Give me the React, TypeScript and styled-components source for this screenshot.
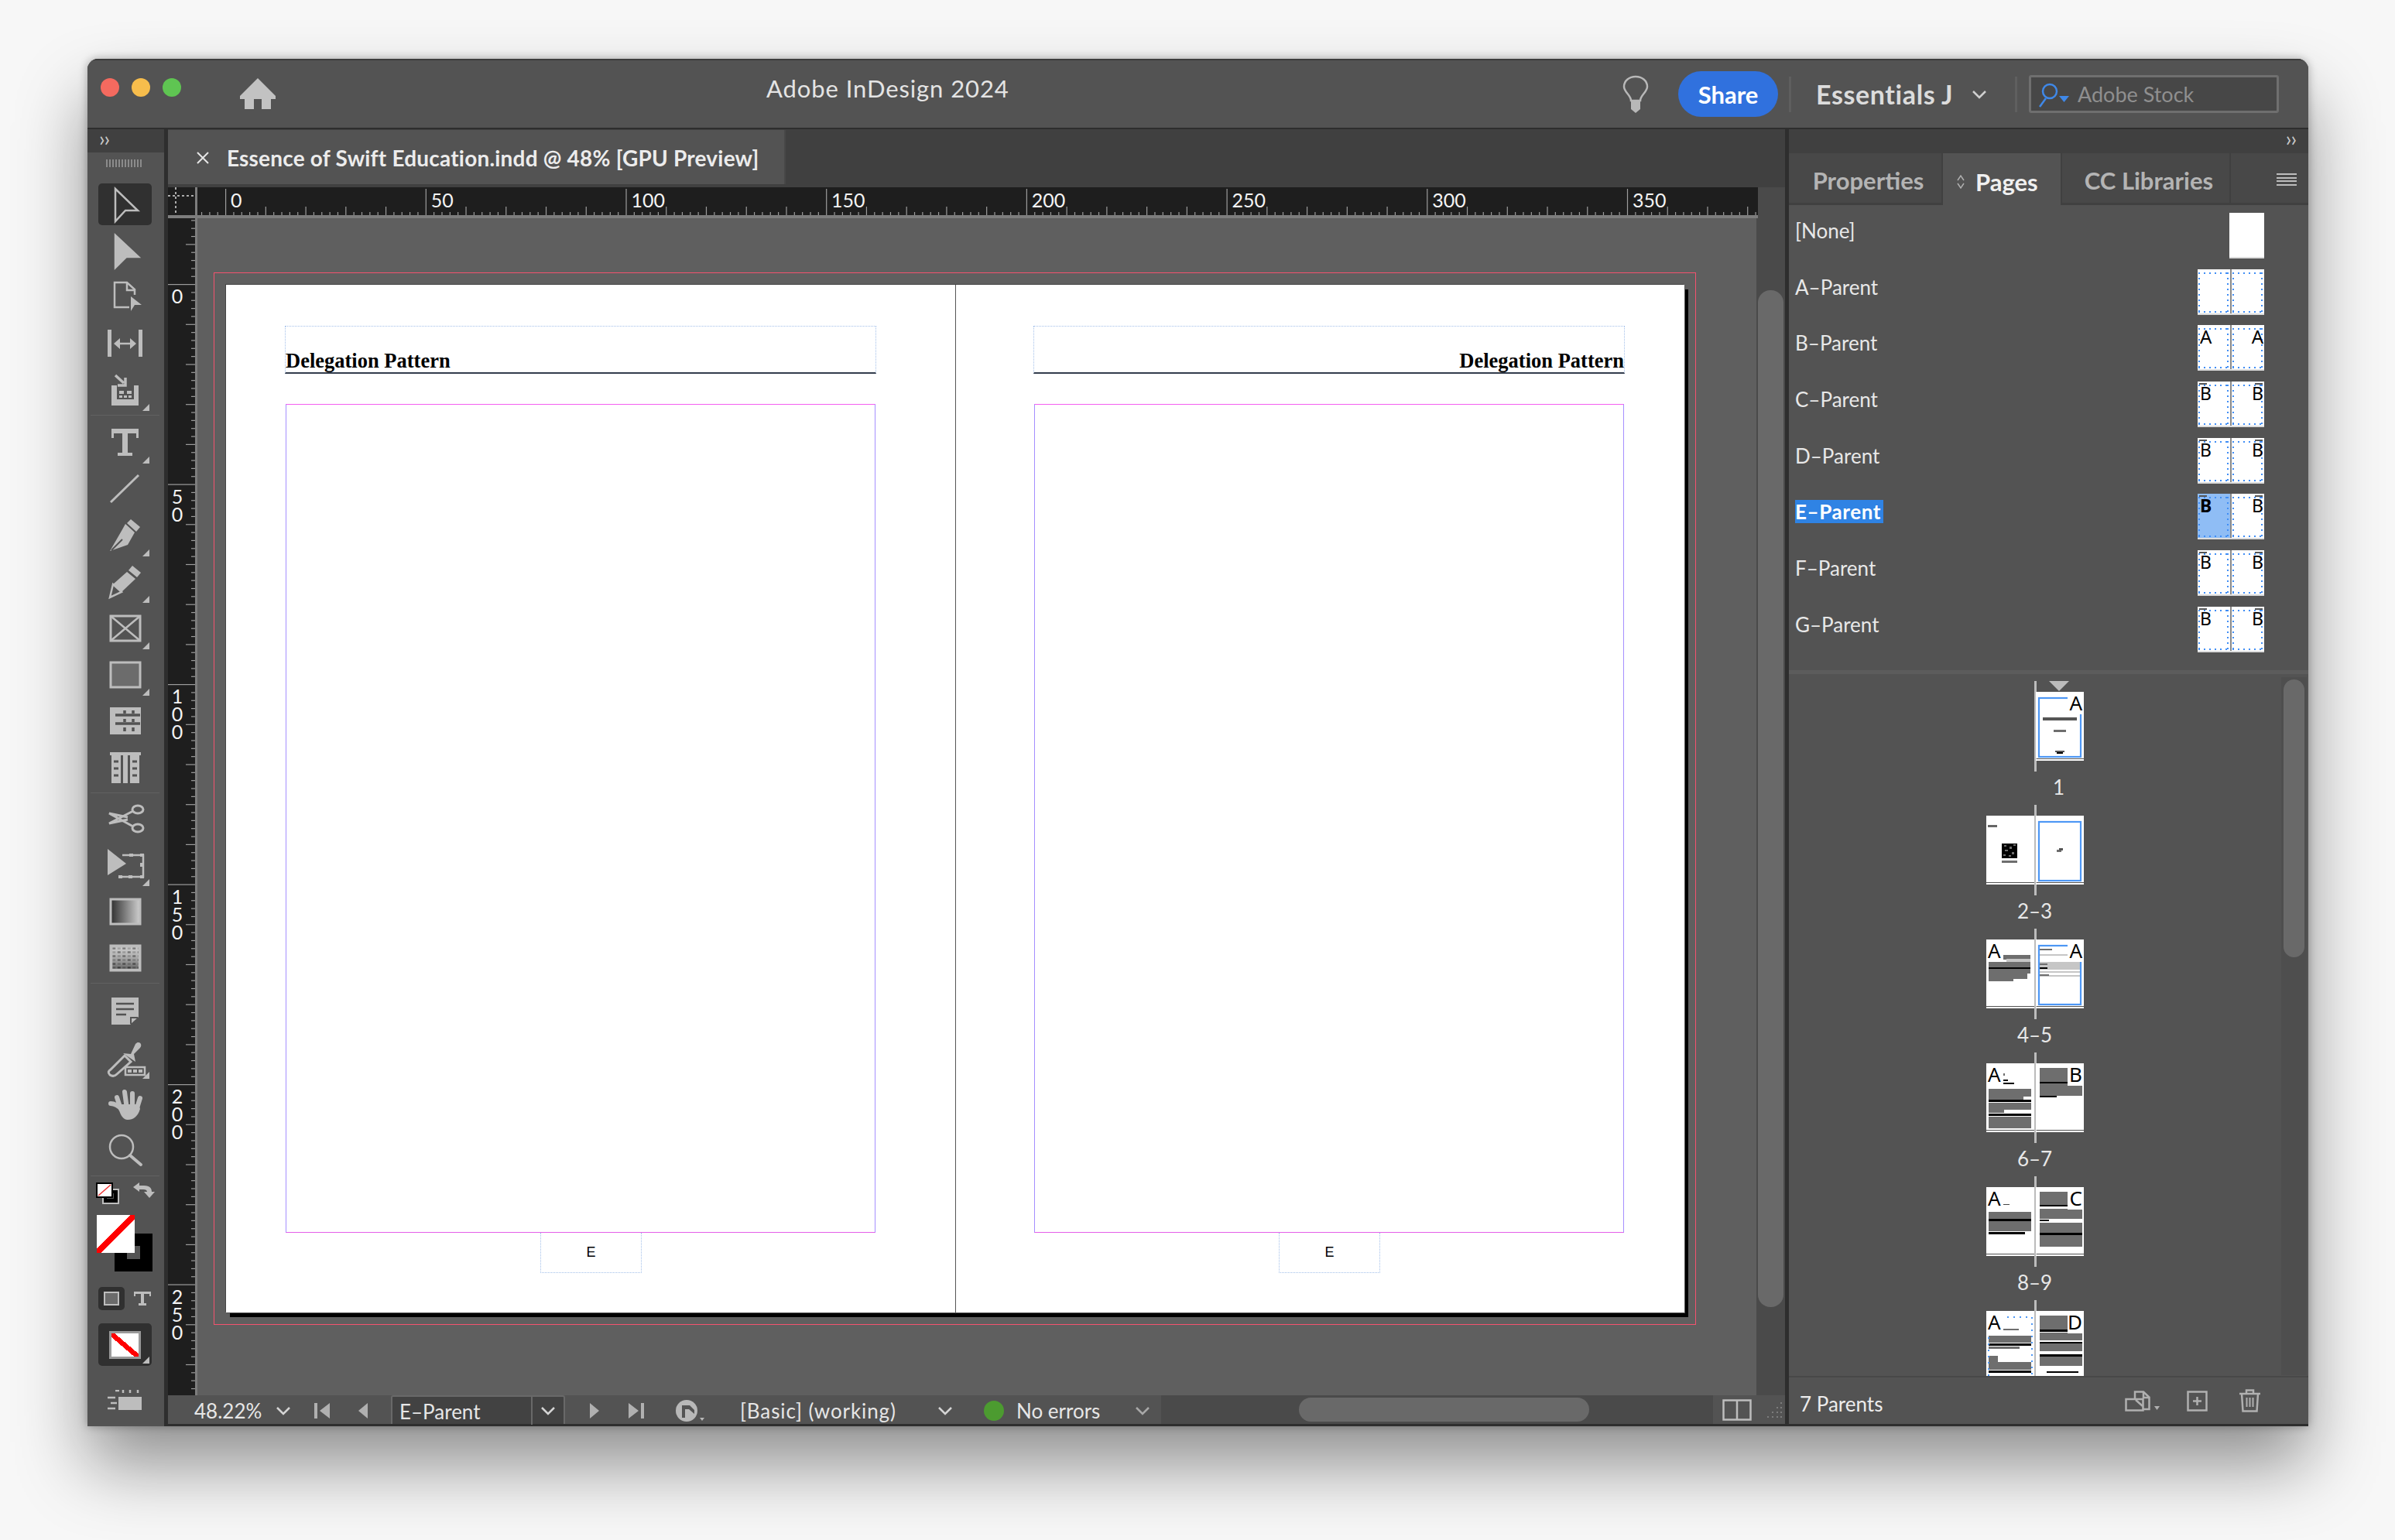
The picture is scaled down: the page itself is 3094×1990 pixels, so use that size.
import React from 'react'
import styled, { createGlobalStyle } from 'styled-components';

const GlobalStyle = createGlobalStyle`
  html, body { margin: 0; padding: 0; }
  body {
    width: 3094px;
    height: 1990px;
    overflow: hidden;
    background: #f7f7f7;
    font-family: Lato, "Open Sans", sans-serif;
  }
  * { box-sizing: border-box; }
`;

const ICON = '#bdbdbd';

/* ---------- window + title bar ---------- */

const Desktop = styled.div`
  padding: 76px 0 0 113px;
`;

const Window = styled.div`
  width: 2869px;
  height: 1767px;
  display: flex;
  flex-direction: column;
  background: #2e2e2e;
  border-radius: 14px 14px 0 0;
  overflow: hidden;
  box-shadow: 0 50px 90px rgba(0, 0, 0, 0.42), 0 0 12px rgba(0, 0, 0, 0.3);
`;

const TitleBar = styled.div`
  height: 89px;
  flex: none;
  display: flex;
  align-items: center;
  background: #535353;
  border-top: 2px solid #3c3c3c;
  margin-bottom: 2px;
`;

const Lights = styled.div`
  display: flex;
  gap: 16px;
  margin: -18px 0 0 17px;
`;

const Light = styled.span<{ $c: string }>`
  width: 24px;
  height: 24px;
  border-radius: 50%;
  background: ${p => p.$c};
`;

const HomeButton = styled.div`
  margin: -2px 0 0 76px;
  width: 46px;
  height: 40px;
  display: flex;
`;

const AppTitle = styled.div`
  width: 316px;
  margin: -15px 0 0 634px;
  color: #e4e4e4;
  font-size: 31px;
  white-space: nowrap;
  letter-spacing: 0.9px;
`;

const TitleRight = styled.div`
  margin-left: auto;
  display: flex;
  align-items: center;
  margin-right: 38px;
`;

const Share = styled.div`
  width: 129px;
  height: 59px;
  border-radius: 30px;
  background: #3071de;
  color: #fff;
  font-size: 31px;
  font-weight: 700;
  display: flex;
  align-items: center;
  justify-content: center;
  margin-left: 38px;
`;

const BarDivider = styled.span<{ $ml?: number }>`
  width: 3px;
  height: 46px;
  margin-left: ${p => p.$ml ?? 0}px;
  background: #5f5f5f;
`;

const Workspace = styled.div`
  width: 289px;
  display: flex;
  align-items: center;
  gap: 24px;
  padding-left: 32px;
  color: #dcdcdc;
  font-size: 34px;
  font-weight: 700;
  white-space: nowrap;
  letter-spacing: 0.6px;
`;

const SearchBox = styled.div`
  width: 323px;
  height: 49px;
  margin-left: 15px;
  border: 3px solid #6f6f6f;
  border-radius: 3px;
  background: #474747;
  display: flex;
  align-items: center;
  gap: 9px;
  padding-left: 9px;
  color: #8f8f8f;
  font-size: 27px;
`;

/* ---------- body columns ---------- */

const Columns = styled.div`
  flex: 1;
  min-height: 0;
  display: flex;
  gap: 5px;
`;

const ToolPanel = styled.div`
  width: 99px;
  flex: none;
  background: #535353;
  display: flex;
  flex-direction: column;
`;

const PanelCap = styled.div<{ $right?: boolean }>`
  height: 30px;
  flex: none;
  background: #404040;
  color: #c8c8c8;
  font-size: 27px;
  line-height: 24px;
  padding: 0 ${p => (p.$right ? '16px' : '0')} 0 ${p => (p.$right ? '0' : '15px')};
  text-align: ${p => (p.$right ? 'right' : 'left')};
  letter-spacing: -1px;
`;

const Grip = styled.div`
  width: 48px;
  height: 10px;
  margin: 9px 0 18px 24px;
  flex: none;
  background: repeating-linear-gradient(90deg, #8b8b8b 0 2px, #535353 2px 4px);
`;

const Tool = styled.div`
  position: relative;
  width: 96px;
  height: 60px;
  flex: none;
  display: flex;
  align-items: center;
  justify-content: center;
`;

const ToolGlyph = styled.span`
  position: relative;
  display: flex;
`;

const ActiveBack = styled.span`
  position: absolute;
  left: 14px;
  top: 3px;
  width: 69px;
  height: 54px;
  border-radius: 5px;
  background: #303030;
`;

const CornerMark = styled.span`
  position: absolute;
  left: 71px;
  bottom: 3px;
  width: 9px;
  height: 9px;
  background: ${ICON};
  clip-path: polygon(100% 0, 100% 100%, 0 100%);
`;

const ToolRule = styled.div<{ $after: number }>`
  height: 1px;
  flex: none;
  margin: 2px 6px ${p => p.$after}px 4px;
  background: #616161;
`;

const SwatchTools = styled.div`
  position: relative;
  height: 118px;
  flex: none;
`;

const DefaultIcons = styled.div`
  height: 30px;
  display: flex;
  gap: 18px;
  padding: 3px 0 0 11px;
`;

const FillBox = styled.div`
  position: absolute;
  left: 12px;
  top: 45px;
  width: 49px;
  height: 49px;
  background: linear-gradient(to top left, #fff 44%, #f00 44%, #f00 56%, #fff 56%);
  z-index: 1;
`;

const StrokeBox = styled.div`
  position: absolute;
  left: 35px;
  top: 69px;
  width: 49px;
  height: 49px;
  border: 16px solid #000;
`;

const ModeRow = styled.div`
  display: flex;
  align-items: center;
  gap: 12px;
  height: 30px;
  margin: 20px 0 17px 14px;
  flex: none;
`;

const ModeButton = styled.div`
  width: 34px;
  height: 30px;
  border-radius: 5px;
  background: #303030;
  display: flex;
  align-items: center;
  justify-content: center;
`;

const ModeSquare = styled.span`
  width: 20px;
  height: 18px;
  background: #6b6b6b;
  border: 2px solid ${ICON};
`;

const TextMode = styled.span`
  display: flex;
`;

const ApplyNone = styled.div`
  position: relative;
  width: 69px;
  height: 55px;
  margin-left: 14px;
  border-radius: 5px;
  background: #303030;
  display: flex;
  align-items: center;
  justify-content: center;
  flex: none;
`;

const ApplyInner = styled.span`
  width: 41px;
  height: 36px;
  border: 3px solid #9a9a9a;
  background: linear-gradient(to top right, #fff 42%, #f00 42%, #f00 56%, #fff 56%);
`;

const ApplyMark = styled(CornerMark)`
  left: 57px;
  bottom: 3px;
`;

const ScreenMode = styled.div`
  margin: 31px 0 0 26px;
  display: flex;
`;

/* ---------- document column ---------- */

const DocColumn = styled.div`
  width: 2089px;
  flex: none;
  display: flex;
  flex-direction: column;
`;

const DocTabs = styled.div`
  height: 75px;
  flex: none;
  background: #404040;
  display: flex;
  padding-top: 1px;
`;

const DocTab = styled.div`
  width: 798px;
  height: 70px;
  background: #535353;
  display: flex;
  align-items: center;
  gap: 22px;
  padding: 2px 0 0 36px;
  color: #ececec;
  font-size: 28px;
  font-weight: 700;
  letter-spacing: 0.2px;
  white-space: nowrap;
  border-right: 2px solid #484848;
`;

const CloseIcon = styled.svg`
  flex: none;
`;

const RulerTop = styled.div`
  height: 40px;
  flex: none;
  display: flex;
`;

const RulerCorner = styled.div`
  width: 38px;
  height: 40px;
  flex: none;
  background: #1e1e1e;
  border-right: 3px solid #7d7d7d;
  border-bottom: 4px solid #7d7d7d;
`;

const TopTicks = styled.div`
  width: 2016px;
  height: 40px;
  flex: none;
  background: #1e1e1e;
  border-bottom: 4px solid #7d7d7d;
  padding-top: 2px;
`;

const TrackCap = styled.div`
  flex: 1;
  background: #4a4a4a;
`;

const DocMiddle = styled.div`
  flex: 1;
  min-height: 0;
  display: flex;
`;

const LeftRuler = styled.div`
  width: 38px;
  flex: none;
  background: #1e1e1e;
  border-right: 3px solid #7d7d7d;
  overflow: hidden;
`;

const Canvas = styled.div`
  width: 2014px;
  flex: none;
  background: #5f5f5f;
  padding: 70px 0 0 21px;
  overflow: hidden;
`;

const Bleed = styled.div`
  width: 1915px;
  height: 1360px;
  border: 1px solid #f4526e;
  padding: 15px 0 0 15px;
`;

const Spread = styled.div`
  width: 1884px;
  height: 1328px;
  display: flex;
  background: #fff;
  box-shadow: 1px 1px 0 #555, 5px 6px 0 #000, -1px -1px 0 #444;
`;

const Page = styled.div<{ $left: number; $right: number; $spine?: boolean }>`
  width: ${p => (p.$spine ? 943 : 941)}px;
  height: 100%;
  padding: 53px ${p => p.$right}px 0 ${p => p.$left}px;
  border-right: ${p => (p.$spine ? '1px solid #555' : 'none')};
`;

const HeaderFrame = styled.div<{ $end?: boolean }>`
  height: 62px;
  border: 1px dotted #a3c0ea;
  border-bottom: 2px solid #333d4d;
  display: flex;
  align-items: flex-end;
  justify-content: ${p => (p.$end ? 'flex-end' : 'flex-start')};
  font-family: "Liberation Serif", serif;
  font-weight: 700;
  font-size: 26.5px;
  line-height: 26px;
  padding-bottom: 2px;
  margin: 0 -1px;
  color: #000;
`;

const MarginBox = styled.div`
  height: 1071px;
  margin-top: 39px;
  border-top: 1px solid #f45ff0;
  border-bottom: 1px solid #e45fe8;
  border-left: 1px solid #a58fff;
  border-right: 1px solid #a58fff;
`;

const FolioFrame = styled.div<{ $offset: number }>`
  width: 131px;
  height: 52px;
  margin-left: ${p => p.$offset}px;
  border: 1px dotted #a3c0ea;
  border-top: none;
  display: flex;
  align-items: center;
  justify-content: center;
  color: #000;
  font-size: 18px;
  font-family: "Liberation Sans", sans-serif;
`;

const VScroll = styled.div`
  flex: 1;
  background: #4a4a4a;
  padding: 93px 2px 0 2px;
`;

const VThumb = styled.div`
  height: 1314px;
  border-radius: 16px;
  background: #696969;
`;

/* ---------- status bar ---------- */

const StatusBar = styled.div`
  height: 37px;
  flex: none;
  display: flex;
  background: #4a4a4a;
  margin-bottom: 3px;
`;

const StatusLeft = styled.div`
  width: 1283px;
  flex: none;
  display: flex;
  align-items: center;
  padding-top: 3px;
  background: #535353;
  color: #e6e6e6;
  font-size: 26px;
  white-space: nowrap;
`;

const StatusText = styled.span<{ $w: number; $ml?: number; $track?: number }>`
  width: ${p => p.$w}px;
  margin-left: ${p => p.$ml ?? 0}px;
  letter-spacing: ${p => p.$track ?? 0}px;
  flex: none;
`;

const PageField = styled.div`
  width: 225px;
  align-self: stretch;
  flex: none;
  margin: -3px 0 0 30px;
  padding: 3px 0 0 9px;
  display: flex;
  border: 2px solid #696969;
  border-bottom: none;
  border-radius: 3px 3px 0 0;
  background: #424242;
  align-items: center;
`;

const FieldText = styled.span`
  width: 170px;
  flex: none;
`;

const FieldDrop = styled.span`
  flex: 1;
  height: 37px;
  margin-top: -3px;
  border-left: 2px solid #696969;
  display: flex;
  align-items: center;
  justify-content: center;
`;

const StatusIcon = styled.span<{ $ml: number }>`
  display: flex;
  margin-left: ${p => p.$ml}px;
  flex: none;
`;

const GreenDot = styled.span`
  width: 26px;
  height: 26px;
  border-radius: 50%;
  background: #4c9b30;
  margin-left: 40px;
  flex: none;
`;

const HScroll = styled.div`
  flex: 1;
  display: flex;
  align-items: center;
  padding-left: 178px;
`;

const HThumb = styled.div`
  width: 375px;
  height: 31px;
  border-radius: 16px;
  background: #696969;
`;

const StatusEnd = styled.div`
  width: 93px;
  flex: none;
  background: #535353;
  display: flex;
  align-items: center;
  padding-left: 12px;
  gap: 18px;
`;

/* ---------- right panel ---------- */

const RightPanel = styled.div`
  flex: 1;
  display: flex;
  flex-direction: column;
  background: #535353;
  margin-bottom: 3px;
`;

const TabRow = styled.div`
  height: 68px;
  flex: none;
  display: flex;
  background: #404040;
  padding-top: 1px;
  gap: 2px;
`;

const PanelTab = styled.div<{ $w: number; $active?: boolean }>`
  width: ${p => p.$w}px;
  height: ${p => (p.$active ? 67 : 64)}px;
  flex: none;
  display: flex;
  align-items: center;
  justify-content: ${p => (p.$active ? 'flex-start' : 'center')};
  gap: 14px;
  padding: 6px 0 0 ${p => (p.$active ? 18 : 8)}px;
  background: ${p => (p.$active ? '#535353' : '#484848')};
  color: ${p => (p.$active ? '#f0f0f0' : '#b4b4b4')};
  font-size: 31px;
  font-weight: 700;
  white-space: nowrap;
`;

const TabFill = styled.div`
  flex: 1;
  height: 64px;
  background: #484848;
  display: flex;
  align-items: center;
  justify-content: flex-end;
  padding: 4px 15px 0 0;
`;

const MenuLines = styled.span`
  width: 26px;
  height: 16px;
  background: repeating-linear-gradient(180deg, #bdbdbd 0 2px, transparent 2px 4.6px);
`;

const ParentList = styled.div`
  height: 606px;
  flex: none;
  padding-top: 10px;
  border-bottom: 5px solid #5c5c5c;
`;

const ParentRow = styled.div`
  height: 72.7px;
  display: flex;
  align-items: flex-start;
  justify-content: space-between;
  padding: 0 57px 0 8px;
`;

const ParentLabel = styled.span<{ $selected?: boolean }>`
  margin-top: 8px;
  height: 30px;
  line-height: 30px;
  padding: 0 3px 0 0;
  font-size: 26px;
  font-weight: ${p => (p.$selected ? 700 : 400)};
  letter-spacing: ${p => (p.$selected ? 0.6 : 0)}px;
  color: ${p => (p.$selected ? '#fff' : '#e8e8e8')};
  background: ${p => (p.$selected ? '#2f83e4' : 'transparent')};
`;

const ThumbPair = styled.div`
  display: flex;
  gap: 2px;
  background: #8a8a8a;
  border-bottom: 2px solid #ddd;
`;

const MiniPage = styled.div<{ $selected?: boolean; $solo?: boolean }>`
  position: relative;
  width: ${p => (p.$solo ? 45 : 42)}px;
  height: 57px;
  background: ${p => (p.$selected ? '#8fbdf5' : '#fff')};
  color: #000;
  font-family: "Noto Sans", sans-serif;
`;

const dotsX = 'repeating-linear-gradient(90deg, #3f8df5 0 2px, transparent 2px 7px)';
const dotsY = 'repeating-linear-gradient(180deg, #3f8df5 0 2px, transparent 2px 7px)';

const MiniGuide = styled.span`
  position: absolute;
  inset: 4px 2px 1px 1px;
  background:
    ${dotsX} top / 100% 2px no-repeat,
    ${dotsX} bottom / 100% 2px no-repeat,
    ${dotsY} left / 2px 100% no-repeat,
    ${dotsY} right / 2px 100% no-repeat;
`;

const MiniTop = styled.span<{ $end?: boolean }>`
  position: absolute;
  top: 2px;
  height: 2px;
  width: 10px;
  background: #555;
  ${p => (p.$end ? 'right: 2px;' : 'left: 2px;')}
`;

const MiniLetter = styled.span<{ $end?: boolean; $bold?: boolean; $big?: boolean }>`
  position: absolute;
  top: 3px;
  font-size: ${p => (p.$big ? 24 : 23)}px;
  line-height: 24px;
  font-weight: ${p => (p.$bold ? 700 : 400)};
  ${p => (p.$end ? 'right: 1px;' : 'left: 3px;')}
`;

const PagesArea = styled.div`
  flex: 1;
  min-height: 0;
  display: flex;
  padding-top: 4px;
`;

const PagesList = styled.div`
  flex: 1;
  overflow: hidden;
  padding: 5px 0 0 255px;
`;

const SpreadBlock = styled.div`
  height: 160px;
`;

const SpreadLine = styled.div`
  height: 117px;
  display: flex;
  align-items: center;
  position: relative;
`;

const Spine = styled.span`
  width: 3px;
  height: 117px;
  background: #bcbcbc;
  margin: 0 -1px 0 0;
  flex: none;
`;

const ThumbSlot = styled.div`
  width: 62px;
  height: 89px;
  flex: none;
  display: flex;
`;

const TargetMark = styled.span`
  position: absolute;
  left: 81px;
  top: 0;
  width: 26px;
  height: 13px;
  background: #bcbcbc;
  clip-path: polygon(0 0, 100% 0, 50% 100%);
`;

const SpreadLabel = styled.div<{ $single?: boolean }>`
  width: 125px;
  margin-left: ${p => (p.$single ? 31 : 0)}px;
  text-align: center;
  color: #e8e8e8;
  font-size: 26px;
  line-height: 30px;
  margin-top: 5px;
`;

const PagesTrack = styled.div`
  width: 33px;
  flex: none;
  margin: 0 2px 1px 0;
  background: #4e4e4e;
  padding: 3px 3px 0;
`;

const PagesThumb = styled.div`
  height: 359px;
  border-radius: 14px;
  background: #696969;
`;

const PanelFooter = styled.div`
  height: 62px;
  flex: none;
  border-top: 2px solid #484848;
  display: flex;
  align-items: center;
  padding: 8px 62px 0 14px;
  color: #ececec;
  font-size: 26px;
`;

const FooterIcons = styled.div`
  margin: -8px 0 0 auto;
  display: flex;
  align-items: center;
  gap: 34px;
`;

const TrashIcon = styled.svg`
  margin-left: 7px;
`;

const ThumbSvg = styled.svg`
  display: block;
  overflow: visible;
`;

/* ---------- drawings ---------- */

const Chevron: React.FC<{ c?: string }> = ({ c = '#d4d4d4' }) => (
  <svg width="20" height="12" viewBox="0 0 20 12">
    <path d="M2 2 L10 10 L18 2" fill="none" stroke={c} strokeWidth="2.5" />
  </svg>
);

const glyph = (body: React.ReactNode) => (
  <svg width="60" height="60" viewBox="0 0 60 60" fill="none" stroke={ICON} strokeWidth="2.5">
    {body}
  </svg>
);

const ruleAfter = [5, 3, 6, 5];

const toolGlyphs: { body: React.ReactNode; mark?: boolean; active?: boolean }[][] = [
  [
    { active: true, body: <path d="M18 10 L47 38 H31 L18 52 Z" /> },
    { body: <path d="M18 10 L48 38 H32 L18 52 Z" fill={ICON} /> },
    { body: <><path d="M43 27 V20 L33 11 H17 V43 H36" /><path d="M33 11 V21 H43" /><path d="M38 29 L52 40 H43 L38 48 Z" fill={ICON} stroke="none" /></> },
    { body: <><path d="M8 12 H13 V47 H8 Z M48 12 H53 V47 H48 Z" fill={ICON} stroke="none" /><path d="M20 30 H41" /><path d="M16 30 L24 23 V37 Z M45 30 L37 23 V37 Z" fill={ICON} stroke="none" /></> },
    { mark: true, body: <><path d="M18 11 L29 21 M31 14 V24 H21" strokeWidth="3.5" /><path d="M13 24 H20 V42 H42 V24 H48 V50 H13 Z" fill={ICON} stroke="none" /><path d="M23 31 h6 v4 h-6z M33 31 h6 v4 h-6z M23 37 h4 v3 h-4z M29 37 h4 v3 h-4z M35 37 h4 v3 h-4z" fill={ICON} stroke="none" /></> },
  ],
  [
    { mark: true, body: <path d="M13 12 H48 V24 H45 V18 H34 V43 H40 V47 H21 V43 H27 V18 H16 V24 H13 Z" fill={ICON} stroke="none" /> },
    { body: <path d="M12 47 L48 12" strokeWidth="3" /> },
    { mark: true, body: <><path d="M38 9 L50 19 L45 25 L33 14 Z" fill={ICON} stroke="none" /><path d="M31 15 L43 26 L34 42 L11 50 L26 24 Z" fill={ICON} stroke="none" /><path d="M13 49 L27 35" stroke="#535353" strokeWidth="2" /></> },
    { mark: true, body: <><path d="M40 9 L51 18 L46 24 L35 15 Z" fill={ICON} stroke="none" /><path d="M33 17 L44 26 L26 43 L15 33 Z" fill={ICON} stroke="none" /><path d="M15 33 L11 50 L26 43 Z" /></> },
    { mark: true, body: <><rect x="12" y="14" width="38" height="32" strokeWidth="3" /><path d="M12 14 L50 46 M50 14 L12 46" /></> },
    { mark: true, body: <rect x="12" y="14" width="38" height="32" strokeWidth="3" fill="#6c6c6c" /> },
    { body: <><rect x="11" y="12" width="40" height="35" fill={ICON} stroke="none" /><path d="M18 22 H50 M18 33 H50 M30 16 V20 M41 16 V20 M30 27 V31 M41 27 V31 M30 38 V43 M41 38 V43" stroke="#535353" strokeWidth="3.5" /></> },
    { body: <><path d="M11 10 H51 V14 H49 V50 H37 V14 H34 V50 H28 V14 H25 V50 H13 V14 H11 Z" fill={ICON} stroke="none" /><path d="M16 22 H22 M16 31 H22 M16 40 H22 M40 22 H46 M40 31 H46 M40 40 H46" stroke="#535353" strokeWidth="3" /></> },
  ],
  [
    { body: <><ellipse cx="47" cy="18" rx="7" ry="5" strokeWidth="3" /><ellipse cx="47" cy="42" rx="7" ry="5" strokeWidth="3" /><path d="M41 20 L10 36 L34 31 M41 40 L10 23 L34 28" strokeWidth="3" /></> },
    { mark: true, body: <><path d="M8 9 L32 28 L8 43 Z" fill={ICON} stroke="none" /><path d="M27 17 H54 V45 H22" /><path d="M22 43 h5 v4 h-5z M35 43 h5 v4 h-5z M50 43 h5 v4 h-5z M50 27 h5 v5 h-5z M50 15 h5 v4 h-5z M36 15 h5 v4 h-5z" fill={ICON} stroke="none" /></> },
    { body: <><defs><linearGradient id="toolGrad"><stop offset="0" stopColor="#2e2e2e" /><stop offset="1" stopColor="#cfcfcf" /></linearGradient></defs><rect x="12" y="14" width="38" height="32" fill="url(#toolGrad)" strokeWidth="3" /></> },
    { body: <><defs><pattern id="checks" width="13" height="10" patternUnits="userSpaceOnUse"><rect width="13" height="10" fill="#5b5b5b" /><rect width="6.5" height="5" fill="#8c8c8c" /><rect x="6.5" y="5" width="6.5" height="5" fill="#8c8c8c" /></pattern><linearGradient id="checksFade" x1="0" y1="0" x2="0" y2="1"><stop offset="0" stopColor="#fff" stopOpacity="0.2" /><stop offset="1" stopColor="#000" stopOpacity="0.5" /></linearGradient></defs><rect x="12" y="14" width="38" height="32" fill="url(#checks)" strokeWidth="3" /><rect x="13" y="15" width="36" height="30" fill="url(#checksFade)" /></> },
  ],
  [
    { body: <><path d="M13 12 H48 V37 L37 47 H13 Z" fill={ICON} stroke="none" /><path d="M19 20 H42 M19 27 H42 M19 34 H32" stroke="#535353" strokeWidth="2.5" /><path d="M38 46 V38 H47" stroke="#535353" strokeWidth="2" /></> },
    { mark: true, body: <><path d="M11 52 C8 49 9 47 12 45 L30 27 L38 35 L20 51 C17 54 14 54 11 52 Z" strokeWidth="3" /><path d="M28 24 L38 25 L44 12 C48 7 54 12 50 17 L42 25 L44 35 Z" fill={ICON} stroke="none" /><rect x="31" y="42" width="25" height="10" fill="#535353" strokeWidth="2.5" /><path d="M34 45 h5 v4 h-5z M41 45 h5 v4 h-5z M48 45 h5 v4 h-5z" fill={ICON} stroke="none" /></> },
    { body: <><path d="M12 29 C19 29 24 34 27 37" strokeWidth="6" strokeLinecap="round" /><path d="M25 36 L20 21 M33 36 L30 14 M40 36 L40 16 M45 38 L50 22" strokeWidth="6" strokeLinecap="round" /><path d="M23 30 H48 L50 36 C47 46 41 50 34 50 C28 50 25 44 23 38 Z" fill={ICON} stroke="none" /></> },
    { body: <><circle cx="26" cy="25" r="15" strokeWidth="2.5" /><path d="M37 36 L51 48" strokeWidth="4" strokeLinecap="round" /></> },
  ],
];

const Home = () => (
  <svg width="46" height="40" viewBox="0 0 46 40">
    <path d="M23 0 L46 23 V27 H40 V40 H28 V27 H18 V40 H6 V27 H0 V23 Z" fill="#c2c2c2" />
  </svg>
);

const Bulb = () => (
  <svg width="34" height="50" viewBox="0 0 34 50" fill="none" stroke="#b8b8b8" strokeWidth="2.5">
    <path d="M11 33 C11 26 2 22 2 15 C2 7 9 2 17 2 C25 2 32 7 32 15 C32 22 23 26 23 33 Z" />
    <path d="M11 34 H23 V44 L17 49 L11 44 Z" fill="#b8b8b8" stroke="none" />
  </svg>
);

const SearchIcon = () => (
  <svg width="42" height="34" viewBox="0 0 42 34" fill="none" stroke="#3f88e8" strokeWidth="2.5">
    <circle cx="15" cy="13" r="9" />
    <path d="M10 22 L2 33" />
    <path d="M27 19 H40 L33.500 27 Z" fill="#3f88e8" stroke="none" />
  </svg>
);

const ticksH = Array.from({ length: 195 }, (_, i) => i);

const TopRuler = () => (
  <svg width="2016" height="34" viewBox="0 0 2016 34" style={{ display: 'block' }}>
    {ticksH.map(i => {
      const x = 36 + i * 10.348;
      const h = i % 25 === 0 ? 34 : i % 5 === 0 ? 11 : 4;
      return <rect key={i} x={x} y={34 - h} width="1.2" height={h} fill="#9c9c9c" />;
    })}
    {ticksH.filter(i => i < 3).map(i => <rect key={`b${i}`} x={36 - 10.348 * (i + 1)} y={30} width="1.2" height="4" fill="#9c9c9c" />)}
    {[0, 50, 100, 150, 200, 250, 300, 350].map((v, i) => (
      <text key={v} x={43 + i * 258.7} y="24" fill="#f4f4f4" fontSize="25" fontFamily="Lato, sans-serif">{v}</text>
    ))}
  </svg>
);

const LeftRulerDrawing = () => (
  <svg width="35" height="1521" viewBox="0 0 35 1521" style={{ display: 'block' }}>
    {Array.from({ length: 152 }, (_, i) => {
      const y = 85 + (i - 8) * 10.34;
      const n = i - 8;
      const w = n % 25 === 0 ? 35 : n % 5 === 0 ? 12 : 5;
      return <rect key={i} x={35 - w} y={y} width={w} height="1.2" fill="#9c9c9c" />;
    })}
    {[0, 50, 100, 150, 200, 250].map((v, i) => (
      <text key={v} fontSize="25" fontFamily="Lato, sans-serif" fill="#f4f4f4" textAnchor="middle">
        {String(v).split('').map((d, k) => (
          <tspan key={k} x="12" y={85 + i * 258.6 + 25 + k * 23}>{d}</tspan>
        ))}
      </text>
    ))}
  </svg>
);

type Bar = [number, number, number, number, string];

const G = '#6e6e6e';
const K = '#000';
const L = '#c6c6c6';

const ThumbArt: React.FC<{ bars?: Bar[]; frame?: boolean; letter?: string; end?: boolean; dotted?: boolean }> = ({ bars = [], frame, letter, end, dotted }) => (
  <ThumbSvg width="62" height="89" viewBox="0 0 62 89">
    <rect width="62" height="86" fill="#fff" />
    <rect y="87" width="62" height="2" fill="#fff" />
    {bars.map((b, i) => <rect key={i} x={b[0]} y={b[1]} width={b[2]} height={b[3]} fill={b[4]} />)}
    {frame && <rect x="4" y="8" width="54" height="76" fill="none" stroke="#4d97f5" strokeWidth="2.2" />}
    {dotted && <rect x="3" y="8" width="56" height="78" fill="none" stroke="#4d97f5" strokeWidth="2" strokeDasharray="2 6" />}
    {letter && <rect x={end ? 41 : 2} y="5" width="20" height="24" fill="#fff" />}
    {letter && (
      <text x={end ? 60 : 2} y="24" textAnchor={end ? 'end' : 'start'} fontSize="26" fontFamily="Noto Sans, sans-serif" fill="#000">{letter}</text>
    )}
  </ThumbSvg>
);

const noise: Bar[] = [
  [20, 36, 20, 19, K],
  [23, 38, 3, 2, G], [30, 40, 3, 3, G], [35, 37, 3, 2, G], [24, 44, 4, 2, G], [33, 47, 3, 3, G], [22, 50, 3, 2, G], [29, 51, 3, 2, G],
  [20, 58, 20, 3, G],
];

const spreads: { label: string; left?: React.ReactNode; right: React.ReactNode }[] = [
  {
    label: '1',
    right: <ThumbArt frame letter="A" end bars={[[9, 33, 44, 4, '#555'], [23, 49, 16, 3, G], [25, 76, 12, 2, '#555'], [27, 78, 8, 2, K]]} />,
  },
  {
    label: '2–3',
    left: <ThumbArt bars={[[2, 12, 12, 3, '#666'], ...noise]} />,
    right: <ThumbArt frame bars={[[27, 44, 6, 3, G], [30, 42, 5, 3, '#555']]} />,
  },
  {
    label: '4–5',
    left: <ThumbArt letter="A" bars={[[20, 20, 37, 6, G], [26, 25, 31, 4, L], [3, 29, 54, 7, G], [3, 36, 54, 2, K], [3, 38, 54, 6, G], [3, 44, 50, 7, G], [3, 51, 32, 3, G]]} />,
    right: <ThumbArt frame letter="A" end bars={[[5, 12, 16, 2, G], [5, 19, 36, 2, L], [5, 29, 52, 10, L], [5, 31, 10, 2, G], [5, 36, 10, 2, K], [5, 41, 52, 2, L], [5, 46, 52, 2, L], [5, 45, 12, 2, G]]} />,
  },
  {
    label: '6–7',
    left: <ThumbArt letter="A" bars={[[20, 13, 4, 3, G], [20, 21, 8, 2, K], [20, 25, 16, 2, K], [3, 33, 55, 10, G], [3, 43, 45, 4, G], [3, 47, 55, 3, K], [3, 51, 55, 9, G], [3, 60, 20, 4, G], [3, 65, 55, 3, K], [3, 69, 55, 15, G]]} />,
    right: <ThumbArt letter="B" end bars={[[5, 6, 42, 18, G], [5, 24, 42, 2, K], [5, 26, 55, 16, G], [5, 42, 22, 2, K]]} />,
  },
  {
    label: '8–9',
    left: <ThumbArt letter="A" bars={[[20, 22, 10, 1, '#444'], [3, 32, 55, 9, G], [3, 41, 55, 3, K], [3, 44, 55, 13, G], [3, 58, 47, 3, K]]} />,
    right: <ThumbArt letter="C" end bars={[[5, 6, 40, 17, G], [5, 23, 40, 2, K], [5, 28, 55, 13, G], [5, 42, 12, 2, K], [5, 46, 55, 13, G], [5, 59, 55, 3, K], [5, 62, 55, 15, G]]} />,
  },
  {
    label: '10–11',
    left: <ThumbArt dotted letter="A" bars={[[20, 23, 22, 2, G], [3, 32, 55, 9, G], [3, 42, 55, 3, K], [3, 46, 40, 3, G], [3, 58, 12, 8, G], [3, 66, 10, 2, K], [3, 66, 55, 10, G], [3, 77, 55, 3, K]]} />,
    right: <ThumbArt letter="D" end bars={[[5, 6, 38, 18, G], [5, 24, 38, 3, K], [5, 28, 55, 10, G], [5, 40, 55, 2, K], [5, 42, 55, 10, G], [5, 56, 55, 3, K], [5, 59, 55, 12, G], [14, 78, 41, 2, K]]} />,
  },
];

const parents: { name: string; letter?: string; selected?: boolean }[] = [
  { name: 'A–Parent' },
  { name: 'B–Parent', letter: 'A' },
  { name: 'C–Parent', letter: 'B' },
  { name: 'D–Parent', letter: 'B' },
  { name: 'E–Parent', letter: 'B', selected: true },
  { name: 'F–Parent', letter: 'B' },
  { name: 'G–Parent', letter: 'B' },
];

const App: React.FC = () => {
  return (
    <Desktop>
      <GlobalStyle />
      <Window>
        <TitleBar>
          <Lights>
            <Light $c="#f46a5f" />
            <Light $c="#f7bd4c" />
            <Light $c="#5fc552" />
          </Lights>
          <HomeButton><Home /></HomeButton>
          <AppTitle>Adobe InDesign 2024</AppTitle>
          <TitleRight>
            <Bulb />
            <Share>Share</Share>
            <BarDivider $ml={14} />
            <Workspace>
              Essentials J
              <Chevron c="#cfcfcf" />
            </Workspace>
            <BarDivider />
            <SearchBox>
              <SearchIcon />
              Adobe Stock
            </SearchBox>
          </TitleRight>
        </TitleBar>

        <Columns>
          <ToolPanel>
            <PanelCap>››</PanelCap>
            <Grip />
            {toolGlyphs.map((group, g) => (
              <React.Fragment key={g}>
                {group.map((t, i) => (
                  <Tool key={i}>
                    {t.active && <ActiveBack />}
                    <ToolGlyph>{glyph(t.body)}</ToolGlyph>
                    {t.mark && <CornerMark />}
                  </Tool>
                ))}
                <ToolRule $after={ruleAfter[g]} />
              </React.Fragment>
            ))}
            <SwatchTools>
              <DefaultIcons>
                <svg width="30" height="28" viewBox="0 0 30 28">
                  <rect x="9" y="9" width="20" height="18" fill="#000" stroke="#bdbdbd" strokeWidth="2" />
                  <rect x="14" y="14" width="9" height="7" fill="#535353" />
                  <rect x="1" y="1" width="20" height="18" fill="#fff" stroke="#000" strokeWidth="2" />
                  <path d="M3 17 L19 3" stroke="#e33" strokeWidth="1.5" />
                </svg>
                <svg width="28" height="20" viewBox="0 0 28 20">
                  <path d="M0 6 L8 0 V4 H14 C22 4 24 8 24 12 H28 L21 20 L14 12 H18 C18 10 16 9 13 9 H8 V12 Z" fill="#bdbdbd" />
                </svg>
              </DefaultIcons>
              <FillBox />
              <StrokeBox />
            </SwatchTools>
            <ModeRow>
              <ModeButton><ModeSquare /></ModeButton>
              <TextMode>
                <svg width="22" height="18" viewBox="0 0 22 18">
                  <path d="M0 0 H22 V6 H20 V3 H13 V15 H16 V18 H6 V15 H9 V3 H2 V6 H0 Z" fill="#bdbdbd" />
                </svg>
              </TextMode>
            </ModeRow>
            <ApplyNone>
              <ApplyInner />
              <ApplyMark />
            </ApplyNone>
            <ScreenMode>
              <svg width="44" height="26" viewBox="0 0 44 26">
                <path d="M14 9 H44 V26 H14 Z" fill="#bdbdbd" />
                <path d="M10 1 h5 M20 0 v4 M29 0 v4 M39 0 v4 M0 10 h10 M4 17 h8 M0 24 h10" stroke="#bdbdbd" strokeWidth="2.5" />
              </svg>
            </ScreenMode>
          </ToolPanel>

          <DocColumn>
            <DocTabs>
              <DocTab>
                <CloseIcon width="18" height="18" viewBox="0 0 18 18">
                  <path d="M2 2 L16 16 M16 2 L2 16" stroke="#e6e6e6" strokeWidth="2" />
                </CloseIcon>
                Essence of Swift Education.indd @ 48% [GPU Preview]
              </DocTab>
            </DocTabs>
            <RulerTop>
              <RulerCorner>
                <svg width="35" height="36" viewBox="0 0 35 36" style={{ display: 'block' }}>
                  <path d="M0 11 H35 M10 0 V36" stroke="#ababab" strokeWidth="2" strokeDasharray="3 3" />
                </svg>
              </RulerCorner>
              <TopTicks><TopRuler /></TopTicks>
              <TrackCap />
            </RulerTop>
            <DocMiddle>
              <LeftRuler><LeftRulerDrawing /></LeftRuler>
              <Canvas>
                <Bleed>
                  <Spread>
                    <Page $left={77} $right={103} $spine>
                      <HeaderFrame>Delegation Pattern</HeaderFrame>
                      <MarginBox />
                      <FolioFrame $offset={329}>E</FolioFrame>
                    </Page>
                    <Page $left={101} $right={78}>
                      <HeaderFrame $end>Delegation Pattern</HeaderFrame>
                      <MarginBox />
                      <FolioFrame $offset={316}>E</FolioFrame>
                    </Page>
                  </Spread>
                </Bleed>
              </Canvas>
              <VScroll><VThumb /></VScroll>
            </DocMiddle>
            <StatusBar>
              <StatusLeft>
                <StatusText $w={105} $ml={34}>48.22%</StatusText>
                <Chevron />
                <StatusIcon $ml={30}>
                  <svg width="20" height="20" viewBox="0 0 20 20"><path d="M0 0 H4 V20 H0 Z M20 0 V20 L7 10 Z" fill="#b0b0b0" /></svg>
                </StatusIcon>
                <StatusIcon $ml={37}>
                  <svg width="12" height="20" viewBox="0 0 12 20"><path d="M12 0 V20 L0 10 Z" fill="#b0b0b0" /></svg>
                </StatusIcon>
                <PageField>
                  <FieldText>E–Parent</FieldText>
                  <FieldDrop><Chevron /></FieldDrop>
                </PageField>
                <StatusIcon $ml={32}>
                  <svg width="12" height="20" viewBox="0 0 12 20"><path d="M0 0 V20 L12 10 Z" fill="#b0b0b0" /></svg>
                </StatusIcon>
                <StatusIcon $ml={38}>
                  <svg width="20" height="20" viewBox="0 0 20 20"><path d="M0 0 V20 L13 10 Z M16 0 H20 V20 H16 Z" fill="#b0b0b0" /></svg>
                </StatusIcon>
                <StatusIcon $ml={40}>
                  <svg width="38" height="30" viewBox="0 0 38 30">
                    <path d="M15 1 A14 14 0 1 1 15 29 A14 14 0 1 1 15 1 Z" fill="#b8b8b8" />
                    <path d="M9 8 V24 H13 V13 H18 L25 19 V14 L19 8 Z" fill="#535353" />
                    <path d="M32 24 H38 L35 28 Z" fill="#b8b8b8" />
                  </svg>
                </StatusIcon>
                <StatusText $w={255} $ml={46} $track={0.9}>[Basic] (working)</StatusText>
                <Chevron />
                <GreenDot />
                <StatusText $w={153} $ml={16}>No errors</StatusText>
                <Chevron c="#a8a8a8" />
              </StatusLeft>
              <HScroll><HThumb /></HScroll>
              <StatusEnd>
                <svg width="38" height="28" viewBox="0 0 38 28" fill="none" stroke="#bdbdbd" strokeWidth="2.5">
                  <rect x="1.500" y="1.500" width="35" height="25" />
                  <path d="M19 1 V27" />
                </svg>
                <svg width="22" height="24" viewBox="0 0 22 24">
                  <path d="M19 2h2v2h-2z M19 8h2v2h-2z M14 8h2v2h-2z M19 14h2v2h-2z M14 14h2v2h-2z M8 14h2v2H8z M19 20h2v2h-2z M14 20h2v2h-2z M8 20h2v2H8z M2 20h2v2H2z" fill="#7c7c7c" />
                </svg>
              </StatusEnd>
            </StatusBar>
          </DocColumn>

          <RightPanel>
            <PanelCap $right>››</PanelCap>
            <TabRow>
              <PanelTab $w={197}>Properties</PanelTab>
              <PanelTab $w={152} $active>
                <svg width="10" height="20" viewBox="0 0 10 20" fill="none" stroke="#b0b0b0" strokeWidth="1.5">
                  <path d="M1 8 L5 2 L9 8 M1 12 L5 18 L9 12" />
                </svg>
                Pages
              </PanelTab>
              <PanelTab $w={216}>CC Libraries</PanelTab>
              <TabFill><MenuLines /></TabFill>
            </TabRow>
            <ParentList>
              <ParentRow>
                <ParentLabel>[None]</ParentLabel>
                <ThumbPair>
                  <MiniPage $solo />
                </ThumbPair>
              </ParentRow>
              {parents.map(p => (
                <ParentRow key={p.name}>
                  <ParentLabel $selected={p.selected}>{p.name}</ParentLabel>
                  <ThumbPair>
                    <MiniPage $selected={p.selected}>
                      <MiniGuide />
                      {p.letter === 'B' && <MiniTop />}
                      {p.letter && <MiniLetter $bold={p.selected} $big={p.letter === 'A'}>{p.letter}</MiniLetter>}
                    </MiniPage>
                    <MiniPage>
                      <MiniGuide />
                      {p.letter === 'B' && <MiniTop $end />}
                      {p.letter && <MiniLetter $end $big={p.letter === 'A'}>{p.letter}</MiniLetter>}
                    </MiniPage>
                  </ThumbPair>
                </ParentRow>
              ))}
            </ParentList>
            <PagesArea>
              <PagesList>
                {spreads.map((s, i) => (
                  <SpreadBlock key={s.label}>
                    <SpreadLine>
                      <ThumbSlot>{s.left}</ThumbSlot>
                      <Spine />
                      <ThumbSlot>{s.right}</ThumbSlot>
                      {i === 0 && <TargetMark />}
                    </SpreadLine>
                    {i < 5 && <SpreadLabel $single={i === 0}>{s.label}</SpreadLabel>}
                  </SpreadBlock>
                ))}
              </PagesList>
              <PagesTrack><PagesThumb /></PagesTrack>
            </PagesArea>
            <PanelFooter>
              7 Parents
              <FooterIcons>
                <svg width="46" height="27" viewBox="0 0 46 27" fill="none" stroke="#b0b0b0" strokeWidth="2.5">
                  <rect x="1.500" y="11" width="22" height="14.500" />
                  <path d="M13 11 V1.500 H24 L31.500 8.500 V24 H23" />
                  <path d="M24 2 V9 H31.500 M14 12 L23 20" />
                  <path d="M38 20 H45 L41.500 25 Z" fill="#b0b0b0" stroke="none" />
                </svg>
                <svg width="27" height="27" viewBox="0 0 27 27" fill="none" stroke="#b0b0b0" strokeWidth="2.5">
                  <rect x="1.500" y="1.500" width="24" height="24" />
                  <path d="M13.500 8 V19 M8 13.500 H19" />
                </svg>
                <TrashIcon width="27" height="30" viewBox="0 0 27 30" fill="none" stroke="#b0b0b0" strokeWidth="2.5">
                  <path d="M0 6 H27 M9 6 V1.500 H18 V6 M3 6 L4.500 28.500 H22.500 L24 6" />
                  <path d="M9.500 11 V23 M13.500 11 V23 M17.500 11 V23" strokeWidth="2" />
                </TrashIcon>
              </FooterIcons>
            </PanelFooter>
          </RightPanel>
        </Columns>
      </Window>
    </Desktop>
  );
};

export default App;
